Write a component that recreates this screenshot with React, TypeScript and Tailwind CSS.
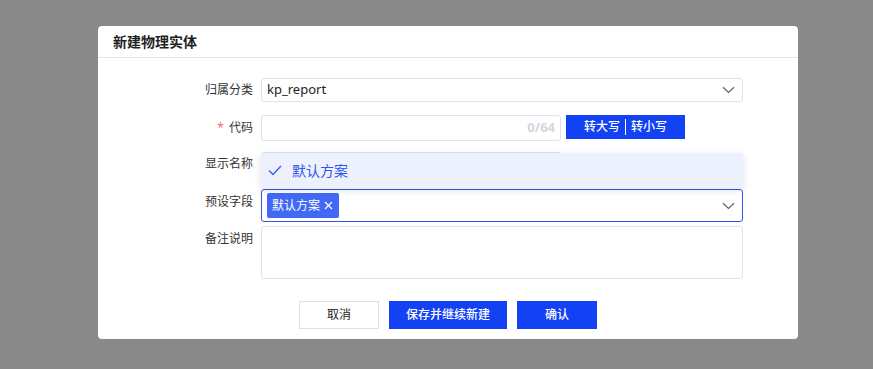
import React from "react";

const font = { fontFamily: '"Noto Sans", "Noto Sans CJK SC", sans-serif' };

function Chevron() {
  return (
    <svg width="13" height="8" viewBox="0 0 13 8" className="shrink-0">
      <path d="M1 1.2 L6.5 6.5 L12 1.2" fill="none" stroke="#5f6368" strokeWidth="1.2" />
    </svg>
  );
}

function Label({ children, lh, required }: { children: React.ReactNode; lh: string; required?: boolean }) {
  return (
    <div className={`w-[155px] shrink-0 text-right text-[12px] text-[#333] ${lh}`}>
      {required && <span className="mr-[5px] text-[#f56c6c]">*</span>}
      {children}
    </div>
  );
}

export default function App() {
  return (
    <div className="h-[369px] w-[873px] bg-[#888988] pl-[98px] pt-[26px]" style={font}>
      <div className="flex h-[313px] w-[700px] flex-col rounded-[4px] bg-white">
        <div className="flex h-[32px] items-center border-b border-[#e3e6ee] pl-[15px] text-[14px] font-bold text-[#1f1f1f]">
          新建物理实体
        </div>

        <div className="flex flex-col pt-[20px]">
          {/* row 1 */}
          <div className="flex gap-[8px]">
            <Label lh="leading-[24px]">归属分类</Label>
            <div className="flex h-[24px] w-[482px] items-center justify-between rounded-[3px] border border-[#dfe2ea] pl-[5px] pr-[7px] text-[13px] text-[#222]">
              <span>kp_report</span>
              <Chevron />
            </div>
          </div>

          {/* row 2 */}
          <div className="mt-[13px] flex gap-[8px]">
            <Label lh="leading-[26px]" required>
              代码
            </Label>
            <div className="flex h-[26px] w-[300px] items-center justify-end rounded-[3px] border border-[#dfe2ea] pr-[5px] text-[13px] font-bold text-[#d3d6de]">
              0/64
            </div>
            <div className="ml-[-3px] flex h-[24px] w-[119px] items-center justify-center bg-[#1341f4] text-[12px] font-medium text-white">
              <span>转大写</span>
              <span className="mx-[5px] h-[16px] w-px bg-white" />
              <span>转小写</span>
            </div>
          </div>

          {/* row 3 */}
          <div className="mt-[11px] flex gap-[8px]">
            <Label lh="leading-[24px]">显示名称</Label>
            <div className="h-[26px] w-[300px] rounded-[3px] border border-[#dfe2ea]" />
          </div>

          {/* row 4 */}
          <div className="mt-[11px] flex gap-[8px]">
            <Label lh="leading-[26px]">预设字段</Label>
            <div className="relative flex h-[33px] w-[482px] items-center justify-between rounded-[3px] border border-[#2f55ee] pl-[5px] pr-[7px]">
              <div className="flex h-[25px] items-center gap-[4px] rounded-[2px] bg-[#4169f6] pl-[5px] pr-[6px] text-[12px] text-white">
                <span>默认方案</span>
                <svg width="9" height="9" viewBox="0 0 9 9">
                  <path d="M1 1 L8 8 M8 1 L1 8" stroke="white" strokeWidth="1.2" />
                </svg>
              </div>
              <Chevron />
              <div className="absolute bottom-[calc(100%+2px)] left-[-1px] flex h-[35px] w-[482px] items-center bg-[#edf0fd] pl-[7px] text-[14px] text-[#2f55ee] shadow-[0_2px_8px_rgba(0,0,0,0.12)]">
                <svg width="14" height="11" viewBox="0 0 14 11" className="mr-[10px]">
                  <path d="M1 5.5 L5 9.5 L13 1" fill="none" stroke="#3a5ef0" strokeWidth="1.3" />
                </svg>
                <span>默认方案</span>
              </div>
            </div>
          </div>

          {/* row 5 */}
          <div className="mt-[4px] flex gap-[8px]">
            <Label lh="leading-[25px]">备注说明</Label>
            <div className="h-[53px] w-[482px] rounded-[3px] border border-[#dfe2ea]" />
          </div>

          {/* footer */}
          <div className="mt-[22px] flex justify-center gap-[10px]">
            <button className="h-[28px] w-[80px] border border-[#dde1e9] bg-white text-[12px] text-[#222]">取消</button>
            <button className="h-[28px] w-[118px] bg-[#1341f4] text-[12px] font-medium text-white">保存并继续新建</button>
            <button className="h-[28px] w-[80px] bg-[#1341f4] text-[12px] font-medium text-white">确认</button>
          </div>
        </div>
      </div>
    </div>
  );
}
